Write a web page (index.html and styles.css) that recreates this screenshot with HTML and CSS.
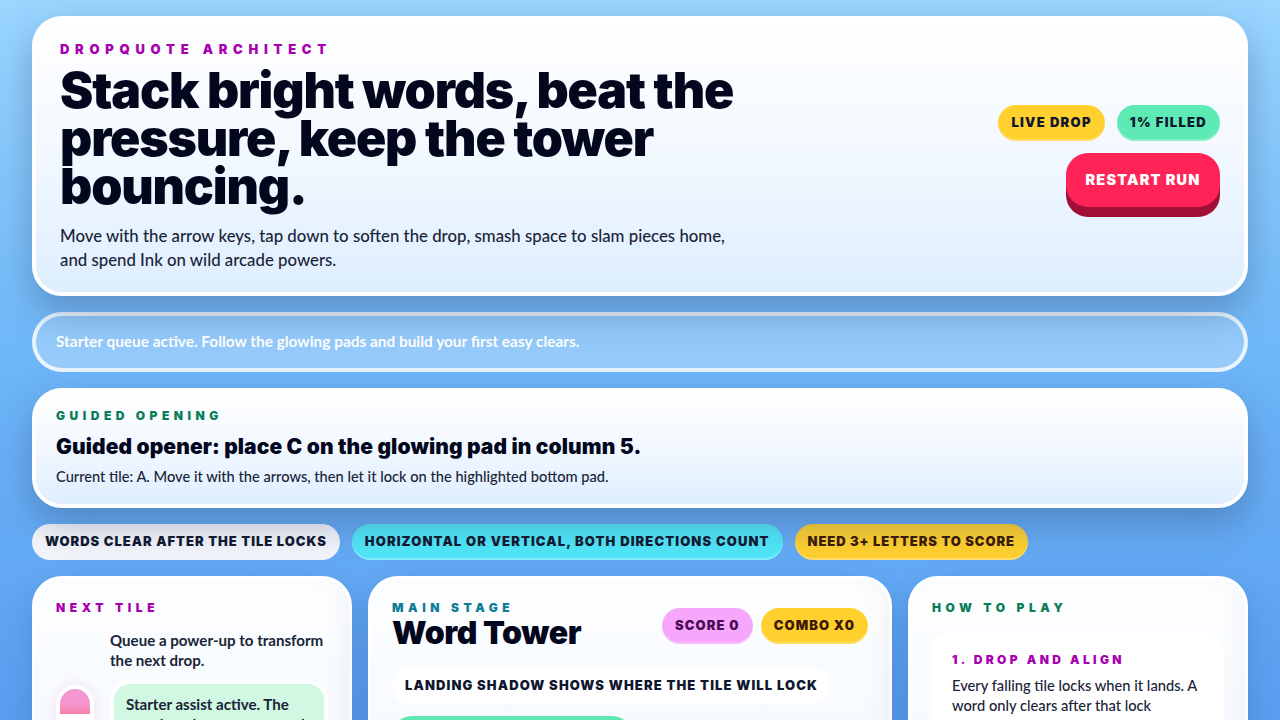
FILE: index.html
```html
<!DOCTYPE html>
<html lang="en">
<head>
    <meta charset="UTF-8">
    <meta name="viewport" content="width=device-width, initial-scale=1.0">
    <title>Dropquote Architect</title>
    <link rel="stylesheet" href="styles.css">
</head>
<body>
    <div class="page">
        <header class="panel hero">
            <div class="hero-copy">
                <p class="eyebrow magenta">DROPQUOTE ARCHITECT</p>
                <h1>Stack bright words, beat the pressure, keep the tower bouncing.</h1>
                <p class="hero-text">Move with the arrow keys, tap down to soften the drop, smash space to slam pieces home, and spend Ink on wild arcade powers.</p>
            </div>
            <div class="hero-actions">
                <div class="pill-row">
                    <span class="pill yellow">LIVE DROP</span>
                    <span class="pill mint">1% FILLED</span>
                </div>
                <button class="restart">RESTART RUN</button>
            </div>
        </header>

        <div class="status">Starter queue active. Follow the glowing pads and build your first easy clears.</div>

        <section class="panel guide">
            <p class="eyebrow green">GUIDED OPENING</p>
            <h2>Guided opener: place C on the glowing pad in column 5.</h2>
            <p class="guide-text">Current tile: A. Move it with the arrows, then let it lock on the highlighted bottom pad.</p>
        </section>

        <div class="chips">
            <span class="pill white">WORDS CLEAR AFTER THE TILE LOCKS</span>
            <span class="pill cyan">HORIZONTAL OR VERTICAL, BOTH DIRECTIONS COUNT</span>
            <span class="pill gold">NEED 3+ LETTERS TO SCORE</span>
        </div>

        <main class="columns">
            <aside class="card next">
                <p class="eyebrow magenta">NEXT TILE</p>
                <div class="next-body">
                    <div class="meter"><div class="meter-fill"></div></div>
                    <div class="next-info">
                        <p class="next-text">Queue a power-up to transform the next drop.</p>
                        <div class="assist">Starter assist active. The opening pieces are queued</div>
                    </div>
                </div>
            </aside>

            <section class="card stage">
                <div class="stage-head">
                    <div>
                        <p class="eyebrow teal">MAIN STAGE</p>
                        <h3>Word Tower</h3>
                    </div>
                    <div class="stage-pills">
                        <span class="pill pink">SCORE 0</span>
                        <span class="pill yellow brown">COMBO X0</span>
                    </div>
                </div>
                <span class="pill hint">LANDING SHADOW SHOWS WHERE THE TILE WILL LOCK</span>
                <div class="stage-bar"></div>
            </section>

            <aside class="card howto">
                <p class="eyebrow green">HOW TO PLAY</p>
                <div class="step">
                    <p class="eyebrow magenta step-title">1. DROP AND ALIGN</p>
                    <p class="step-text">Every falling tile locks when it lands. A word only clears after that lock happens.</p>
                </div>
            </aside>
        </main>
    </div>
</body>
</html>
```

FILE: styles.css
```css
*,::after,::before{margin: 0; box-sizing: border-box;}
html,body{height: 720px; overflow: hidden;}
body{font-family: Lato, "Noto Sans", sans-serif; color: #1a2438; background: linear-gradient(180deg, #9ad6ff 0%, #6db6f8 50%, #5a9ef0 100%);}
.page{padding: 16px 32px; display: flex; flex-direction: column;}

.panel{position: relative; border: 4px solid #fff; border-radius: 30px; background: linear-gradient(180deg, #fff 0%, #f2f8ff 50%, #deeeff 100%); box-shadow: 0 16px 36px rgba(50,70,110,.36);}
.eyebrow{font-family: Inter, sans-serif; font-size: 12px; line-height: 16px; font-weight: 900; letter-spacing: .38em;}
.magenta{color: #a800b0;}
.green{color: #0a7d58;}
.teal{color: #0e7b96;}

.hero{height: 280px; padding: 21px 24px; display: flex; justify-content: space-between;}
.hero-copy{width: 690px;}
.hero .eyebrow{font-size: 13px; letter-spacing: .44em;}
.hero h1{font-family: Inter, sans-serif; font-size: 50px; line-height: 48px; font-weight: 900; color: #03071e; margin-top: 9px; letter-spacing: -1.15px;}
.hero-text{font-size: 16.8px; line-height: 24px; font-weight: 500; margin-top: 14px;}
.hero-actions{display: flex; flex-direction: column; align-items: flex-end; gap: 12px; margin-top: 64px;}
.pill-row{display: flex; gap: 12px;}
.pill-row .pill{letter-spacing: .1em;}

.pill{display: inline-block; height: 36px; line-height: 35px; padding: 0 13px; border-radius: 18px; font-family: Inter, sans-serif; font-size: 13px; font-weight: 900; letter-spacing: .085em; white-space: nowrap; color: #10182f;}
.yellow{background: #ffd02e; box-shadow: inset 0 -2px 0 rgba(255,255,255,.25);}
.mint{background: #5eeab4; box-shadow: inset 0 -2px 0 rgba(255,255,255,.25);}
.pink{background: #f6a6fb; color: #4b0a55; box-shadow: inset 0 -2px 0 rgba(255,255,255,.25);}
.brown{color: #3b1a05;}

.restart{width: 154px; height: 54px; margin-bottom: 10px; padding-bottom: 2px; border: none; border-radius: 22px; background: #ff2357; color: #fff; font-family: Inter, sans-serif; font-size: 14.5px; font-weight: 900; letter-spacing: .08em; box-shadow: 0 10px 0 #a01036;}

.status{margin-top: 16px; height: 60px; padding: 0 20px 2px; display: flex; align-items: center; border: 4px solid rgba(255,255,255,.8); border-radius: 30px; background: linear-gradient(180deg, rgba(255,255,255,.22), rgba(255,255,255,.3)); color: #fff; font-size: 15.4px; font-weight: 700;}

.guide{margin-top: 16px; height: 120px; padding: 16px 20px;}
.guide .eyebrow{letter-spacing: .375em;}
.guide h2{font-family: Inter, sans-serif; font-size: 21px; line-height: 28px; font-weight: 900; color: #03071e; margin-top: 9px; letter-spacing: .1px;}
.guide-text{font-size: 14.65px; line-height: 20px; font-weight: 500; margin-top: 6px;}

.chips{display: flex; gap: 12px; margin-top: 16px;}
.white{background: #f3f5fb; letter-spacing: .075em;}
.cyan{background: #50e6f8; box-shadow: inset 0 -2px 0 rgba(255,255,255,.3);}
.gold{background: #ffd02e; color: #3b1a05; letter-spacing: .07em; box-shadow: inset 0 -2px 0 rgba(255,255,255,.3);}

.columns{display: grid; grid-template-columns: 320px 524px 340px; gap: 16px; margin-top: 16px;}
.card{height: 500px; border: 3px solid #fff; border-radius: 30px; padding: 21px; background: linear-gradient(180deg, #fdfeff 0, #f7fbff 130px); box-shadow: 0 14px 30px rgba(30,60,110,.2), inset -10px 0 20px rgba(60,70,110,.03);}
.next-body{display: flex; align-items: flex-start; gap: 16px; margin-top: 14px;}
.meter{width: 38px; height: 120px; border: 4px solid #fff; border-radius: 19px 19px 0 0; background: #fff; overflow: hidden; box-shadow: 0 0 14px rgba(244,120,200,.22); margin-top: 55px;}
.meter-fill{height: 25px; background: linear-gradient(180deg, #f497cf 60%, #fb7fa8);}
.next-info{width: 218px;}
.next-text{font-size: 15.1px; line-height: 20px; font-weight: 700;}
.assist{margin-top: 10px; border: 4px solid #fff; border-radius: 20px; background: #d0f8e2; padding: 10px 12px; font-size: 15.1px; line-height: 20px; font-weight: 700;}

.stage-head{display: flex; justify-content: space-between; align-items: flex-start;}
.stage-head h3{font-family: Inter, sans-serif; font-size: 32px; line-height: 34px; font-weight: 900; color: #03071e; letter-spacing: -.4px;}
.stage-pills{display: flex; gap: 8px; margin-top: 8px;}
.hint{margin-top: 18px; background: #fff;}
.stage-bar{width: 240px; height: 60px; border-radius: 20px; background: #5ce8b0; margin-top: 12px;}

.howto .step{margin-top: 16px; padding: 20px; border-radius: 20px; background: #fff;}
.step-title{letter-spacing: .28em;}
.step-text{font-size: 14.7px; line-height: 20px; font-weight: 500; margin-top: 7px;}
```
